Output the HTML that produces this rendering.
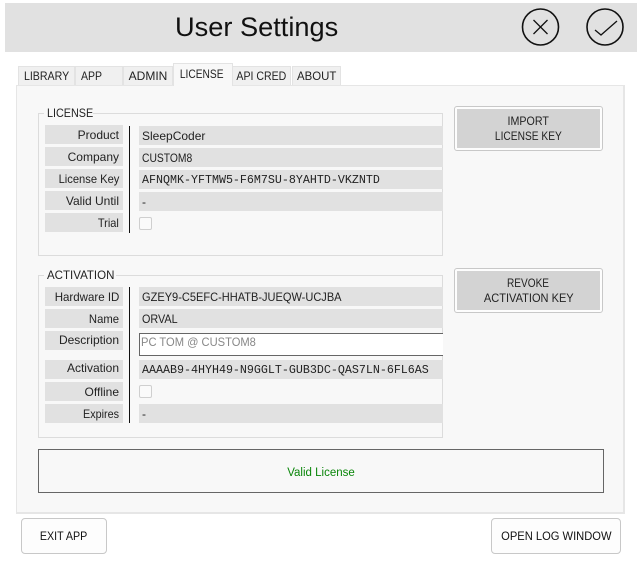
<!DOCTYPE html>
<html><head><meta charset="utf-8">
<style>
html,body{margin:0;padding:0;background:#fff}
body{width:641px;height:574px;position:relative;overflow:hidden;font:12px "Liberation Sans",sans-serif;color:#222}
div{position:absolute;box-sizing:border-box;white-space:nowrap}
i{font-style:normal;display:inline-block;transform:scaleX(var(--s))}
.tab{top:66px;height:20px;background:#f0f0f0;border:1px solid #e3e3e3;border-bottom:0;line-height:19px;text-align:center}
.grp{left:38px;width:405px;border:1px solid #dcdcdc}
.cap{left:44px;background:#f8f8f8;padding:0 3px;line-height:14px;height:14px;overflow:hidden}
.cap i{transform-origin:left}
.l{left:45px;width:78px;height:19px;background:#e1e1e1;text-align:right;padding-right:4px;line-height:20px}
.l i{transform-origin:right}
.v{left:139px;width:304px;height:19px;background:#e1e1e1;padding-left:3px;line-height:21px}
.v i{transform-origin:left}
.m{font-family:"Liberation Mono",monospace;font-size:11.67px}
.cb{left:139px;width:13px;height:13px;background:#fafafa;border:1px solid #cfcfcf;border-radius:2px}
.ln{left:129px;width:1px;background:#111}
.btn{left:454px;width:149px;height:45px;border:1px solid #c8c8c8;border-radius:3px;background:#fdfdfd}
.btn div{left:2px;top:2px;width:143px;height:39px;background:#d3d3d3;text-align:center;line-height:15px;padding-top:5px}
.b2{top:518px;height:36px;background:#fdfdfd;border:1px solid #c8c8c8;border-radius:4px;text-align:center;line-height:34px;color:#111}
</style></head><body>
<div style="left:5px;top:3px;width:632px;height:49px;background:#e1e1e1"></div>
<div style="left:175px;top:11px;font-size:27.2px;line-height:32px;color:#111">User Settings</div>
<svg style="position:absolute;left:515px;top:0" width="126" height="56" fill="none" stroke="#111">
<circle cx="25.5" cy="27" r="18" stroke-width="1.6"/>
<path d="M18.5 20L32.5 34M32.5 20L18.5 34" stroke-width="1.3"/>
<circle cx="90" cy="27" r="18" stroke-width="1.6"/>
<path d="M80 30L86 35L102 21" stroke-width="1.3"/>
</svg>

<div class="tab" style="left:18px;width:57px"><i style="--s:.885">LIBRARY</i></div>
<div class="tab" style="left:75px;width:48px;text-align:left;padding-left:5px"><i style="--s:.875;transform-origin:left">APP</i></div>
<div class="tab" style="left:123px;width:50px">ADMIN</div>
<div class="tab" style="left:232px;width:59px"><i style="--s:.88">API CRED</i></div>
<div class="tab" style="left:292px;width:49px;padding-left:1px"><i style="--s:.95">ABOUT</i></div>
<div style="left:16px;top:85px;width:609px;height:429px;background:#f8f8f8;border:1px solid #e6e6e6;border-width:1px 2px 2px 1px"></div>
<div class="tab" style="left:173px;width:60px;top:63px;height:23px;background:#f8f8f8;line-height:20px;color:#222;padding-right:2px"><i style="--s:.85">LICENSE</i></div>

<div class="grp" style="top:113px;height:143px"></div>
<div class="cap" style="top:106px;width:49px"><i style="--s:.9">LICENSE</i></div>
<div class="l" style="top:125px">Product</div>
<div class="l" style="top:147px">Company</div>
<div class="l" style="top:169px"><i style="--s:.93">License Key</i></div>
<div class="l" style="top:191px">Valid Until</div>
<div class="l" style="top:213px"><i style="--s:.92">Trial</i></div>
<div class="ln" style="top:126px;height:107px"></div>
<div class="v" style="top:126px">SleepCoder</div>
<div class="v" style="top:148px"><i style="--s:.86">CUSTOM8</i></div>
<div class="v m" style="top:170px">AFNQMK-YFTMW5-F6M7SU-8YAHTD-VKZNTD</div>
<div class="v" style="top:192px">-</div>
<div class="cb" style="top:217px"></div>

<div class="grp" style="top:275px;height:163px"></div>
<div class="cap" style="top:268px;width:72px"><i style="--s:.96">ACTIVATION</i></div>
<div class="l" style="top:287px"><i style="--s:.96">Hardware ID</i></div>
<div class="l" style="top:309px"><i style="--s:.94">Name</i></div>
<div class="l" style="top:331px;line-height:18px">Description</div>
<div class="l" style="top:360px;line-height:16px">Activation</div>
<div class="l" style="top:382px">Offline</div>
<div class="l" style="top:404px"><i style="--s:.9">Expires</i></div>
<div class="ln" style="top:287px;height:136px"></div>
<div class="v" style="top:287px"><i style="--s:.92">GZEY9-C5EFC-HHATB-JUEQW-UCJBA</i></div>
<div class="v" style="top:309px"><i style="--s:.9">ORVAL</i></div>
<div style="left:139px;top:333px;width:304px;height:23px;background:#fff;border:1px solid #666;border-right:0;padding-left:1px;line-height:16px;color:#888"><i style="--s:.93;transform-origin:left">PC TOM @ CUSTOM8</i></div>
<div class="v m" style="top:360px">AAAAB9-4HYH49-N9GGLT-GUB3DC-QAS7LN-6FL6AS</div>
<div class="cb" style="top:385px"></div>
<div class="v" style="top:404px">-</div>

<div class="btn" style="top:106px"><div><i style="--s:.89">IMPORT</i><br><i style="--s:.85">LICENSE KEY</i></div></div>
<div class="btn" style="top:268px"><div><i style="--s:.84">REVOKE</i><br><i style="--s:.92">ACTIVATION KEY</i></div></div>

<div style="left:38px;top:449px;width:566px;height:44px;border:1px solid #666;text-align:center;line-height:44px;color:#0a860a;font-size:11.5px;padding-top:1px">Valid License</div>

<div class="b2" style="left:21px;width:86px"><i style="--s:.89">EXIT APP</i></div>
<div class="b2" style="left:491px;width:130px"><i style="--s:.93">OPEN LOG WINDOW</i></div>
</body></html>
